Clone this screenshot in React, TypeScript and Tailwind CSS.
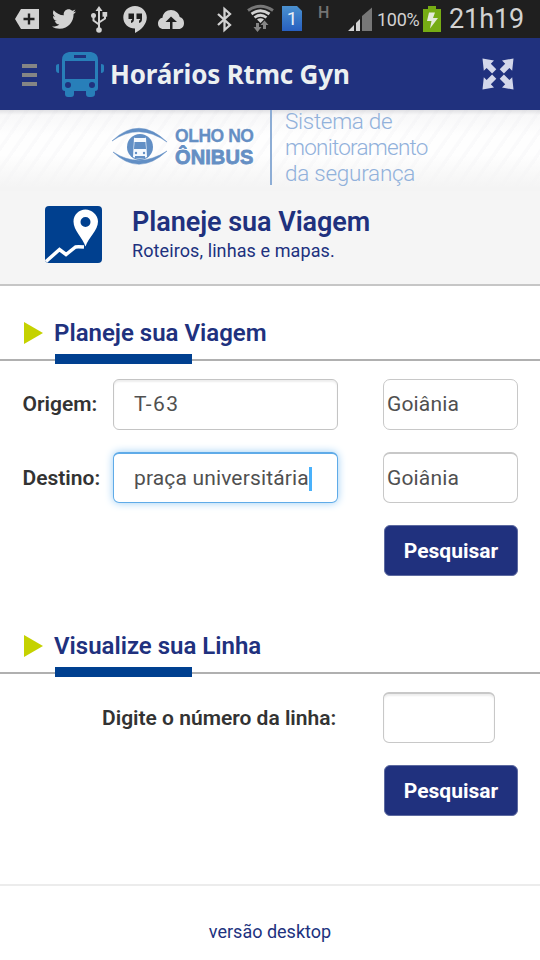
import type { ReactNode } from "react";
import { FaTwitter } from "react-icons/fa";

type IconProps = { x: number; y: number; w: number; h: number; className: string; children: ReactNode };

// Icon whose viewBox uses the coordinates of the screen it is drawn on.
function Icon({ x, y, w, h, className, children }: IconProps) {
  return (
    <svg viewBox={`${x} ${y} ${w} ${h}`} width={w} height={h} fill="currentColor" className={`shrink-0 overflow-visible ${className}`}>
      {children}
    </svg>
  );
}

function StatusBar() {
  return (
    <div className="flex h-[38px] items-start bg-[#1f1f1f] text-[#d2d2d2]">
      <Icon x={15} y={9} w={24} h={20} className="mt-[9px] ml-[15px]">
        <path d="M21 9H39V29H21L15 19Z" />
        <path d="M29 13.500v11M23.500 19h11" stroke="#1f1f1f" strokeWidth="2.400" />
      </Icon>
      <FaTwitter size={24} className="mt-[7px] ml-[13px] shrink-0" />
      <Icon x={91} y={6} w={16} h={27} className="mt-[6px] ml-[15px]">
        <path d="M99 9V30M93.500 17V20.500L99 24.500M105 15V18.500L99 22.500" fill="none" stroke="currentColor" strokeWidth="2" />
        <path d="M99 6l3.500 5h-7Z" />
        <circle cx="99" cy="30" r="2.800" />
        <circle cx="93.500" cy="15.500" r="2.500" />
        <rect x="102.500" y="12" width="4.700" height="4.700" />
      </Icon>
      <Icon x={123} y={6} w={24} h={27} className="mt-[6px] ml-[16px]">
        <path d="M135 6C128.200 6 123.300 11 123.300 17.500S128.500 28.500 135 28.500V33C142 29.500 146.800 23.500 146.800 17.500S141.800 6 135 6Z" />
        <path d="M128.500 13.500H134V19C134 21.200 133 22.500 131 23V20.500C132 20.200 132.200 19.800 132.200 19H128.500ZM136.500 13.500H142V19C142 21.200 141 22.500 139 23V20.500C140 20.200 140.200 19.800 140.200 19H136.500Z" fill="#1f1f1f" />
      </Icon>
      <Icon x={158} y={9} w={26} h={20} className="mt-[9px] ml-[11px]">
        <path d="M163.500 29C160 29 158 26.500 158 23.500C158 20.500 160 18 162.500 17.700C163 13 166.500 10 171 10C175.500 10 179 13 179.700 17C182.300 17.500 184 20 184 23C184 26.500 182 29 178.500 29H172.500V22H177L171 16.500L165.500 22H170V29Z" />
      </Icon>
      <Icon x={217} y={8} w={15} h={23} className="mt-[8px] ml-[33px]">
        <path d="M218 14L230 25L224.500 30V9L230 14L218 25" fill="none" stroke="currentColor" strokeWidth="2.300" />
      </Icon>
      <Icon x={247} y={5} w={27} h={27} className="mt-[5px] ml-[15px]">
        <path d="M248 10.500Q260.500 2 273 10.500" fill="none" stroke="#777" strokeWidth="3" />
        <path d="M251.500 14Q260.500 7.500 269.500 14M254.500 17.500Q260.500 13 266.500 17.500" fill="none" stroke="currentColor" strokeWidth="2.800" />
        <path d="M257 19.500Q260.500 17 264 19.500L260.500 23Z" />
        <path d="M256 23H259V27H261.500L257.500 32L253.500 27H256ZM263 29H266V25H268.500L264.500 20.500L260.500 25H263Z" fill="#858585" />
      </Icon>
      <div className="mt-[6px] ml-[8px] flex h-[25px] w-5 shrink-0 items-center justify-center bg-linear-to-b from-[#4b91cf] to-[#285fc0] font-[Roboto] text-[19px] leading-none text-[#e8eef6] [clip-path:polygon(0_0,75%_0,100%_20%,100%_100%,0_100%)]">1</div>
      <div className="mt-[4px] ml-[16px] w-[13px] shrink-0 font-[Roboto] text-[16px] leading-[17px] font-medium text-[#747474]">H</div>
      <Icon x={348} y={8} w={24} h={23} className="mt-[8px] ml-[17px]">
        <path d="M348 31L354 25V31ZM356 23L360 19V31H356Z" />
        <path d="M362 16L372 7.500V31H362Z" fill="#777" />
      </Icon>
      <div className="mt-[8px] ml-[5px] w-[46px] shrink-0 font-[Roboto] text-[18px] leading-[24px] tracking-[-0.3px]">100%</div>
      <Icon x={423} y={6} w={18} h={26} className="mt-[6px]">
        <path d="M428 6h8v3h5v23h-18V9h5Z" fill="#76ac14" />
        <path d="M429 12.500H435L433 18H438L430 28.500L431.500 21H427Z" fill="#e5eadb" />
      </Icon>
      <div className="mt-[2px] ml-[8px] shrink-0 font-[Roboto] text-[27px] leading-[34px] tracking-[-0.1px]">21h19</div>
    </div>
  );
}

function AppHeader() {
  return (
    <header className="flex h-[72px] items-start bg-[#20317e]">
      <div className="mt-[26px] ml-[22px] flex w-[15px] shrink-0 flex-col gap-[5px]">
        <i className="h-1 bg-[#858585]" />
        <i className="h-1 bg-[#858585]" />
        <i className="h-1 bg-[#858585]" />
      </div>
      <Icon x={56} y={52} w={48} h={45} className="mt-[14px] ml-[19px] text-[#287fb9]">
        <path fillRule="evenodd" d="M69 52H91Q98 53 98 60V88Q98 91 95 91V94Q95 97 91 97H89Q86 97 86 94V91H74V94Q74 97 71 97H68Q65 97 65 94V91Q62 91 62 88V60Q62 53 69 52ZM74 55V58H86V55ZM65 61V79H95V61ZM65 85a3 3 0 1 0 6 0a3 3 0 1 0-6 0ZM89 85a3 3 0 1 0 6 0a3 3 0 1 0-6 0Z" />
        <path d="M59 64V73Q56 73 56 70V66Q56 64 59 64ZM101 64V73Q104 73 104 70V66Q104 64 101 64Z" />
      </Icon>
      <h1 className="mt-[18px] ml-[6px] w-[260px] shrink-0 font-['Noto_Sans'] text-[26px] leading-9 font-bold tracking-[-0.18px] whitespace-nowrap text-[#ecf0f1]">Horários Rtmc Gyn</h1>
      <Icon x={482} y={58} w={32} h={32} className="mt-[20px] ml-[112px] text-[#d3d7ea]">
        <path d="M482.500 58.500l11.500 2-3.200 3.200 5.500 5.500-4.200 4.200-5.500-5.500-2.800 2.800ZM513.500 58.500l-11.500 2 3.200 3.200-5.500 5.500 4.200 4.200 5.500-5.500 2.800 2.800ZM482.500 89.500l11.500-2-3.200-3.200 5.500-5.500-4.200-4.200-5.500 5.500-2.800-2.800ZM513.500 89.500l-11.500-2 3.200-3.200-5.500-5.500 4.200-4.200 5.500 5.500 2.800-2.800Z" />
      </Icon>
    </header>
  );
}

function Banner() {
  return (
    <section className="flex h-[81px] items-start bg-[linear-gradient(to_bottom,rgba(170,170,180,0.35)_0,rgba(225,225,230,0.22)_5px,transparent_25px,transparent_45px,#f4f4f4_78px),repeating-linear-gradient(125deg,#fefefe_0,#fefefe_8px,#fafafb_9px,#fafafb_12px)]">
      <Icon x={112} y={127} w={55} h={38} className="mt-[17px] ml-[112px] text-[#628fc5]">
        <path d="M112 141Q139 115 167 142Q139 122 112 141ZM113 152Q139 177 167 151Q139 169 113 152Z" stroke="currentColor" strokeWidth="0.500" />
        <circle cx="140" cy="147" r="13" />
        <path d="M134 138Q140 134 146 138L147 157Q140 160 133 157Z" fill="#f5f9fe" />
        <path d="M134.500 142H145.500L146 149H134Z" />
        <circle cx="136" cy="153" r="1.200" /><circle cx="144" cy="153" r="1.200" />
        <path d="M135 137H145M135 157H145" stroke="currentColor" strokeWidth="2" />
      </Icon>
      <div className="mt-[16px] ml-[8px] w-[82px] shrink-0 font-['Liberation_Sans'] font-bold whitespace-nowrap text-[#658fc4]">
        <div className="text-[17.5px] leading-[21px] tracking-[-0.45px] [-webkit-text-stroke:0.3px_#658fc4]">OLHO NO</div>
        <div className="text-[20px] leading-[21px] tracking-[0.1px] [-webkit-text-stroke:0.8px_#658fc4]">ÔNIBUS</div>
      </div>
      <div className="ml-[13px] h-[75px] w-[2px] shrink-0 bg-[#8dadd5]" />
      <div className="-mt-[2px] ml-[13px] shrink-0 font-[Roboto] text-[22.500px] leading-[26px] font-light whitespace-nowrap text-[#91b1db]">
        <div className="tracking-[-0.3px]">Sistema de</div>
        <div className="tracking-[-0.75px]">monitoramento</div>
        <div className="tracking-[-0.25px]">da segurança</div>
      </div>
    </section>
  );
}

function Feature() {
  return (
    <section className="flex h-[95px] items-start border-b-2 border-[#c6c6c6] bg-[#f5f5f5]">
      <Icon x={45} y={206} w={57} h={57} className="mt-[15px] ml-[45px]">
        <rect x="45" y="206" width="57" height="57" rx="4" fill="#00408f" />
        <path fillRule="evenodd" fill="#fff" d="M85.500 209C91.500 209 98 214 98 221C98 230 88.500 237 85.500 246C82.500 237 73.500 230 73.500 221C73.500 214 79 209 85.500 209ZM80.500 221.500a5 5 0 1 0 10 0a5 5 0 1 0-10 0Z" transform="translate(0 .5)" />
        <path d="M46 261.500L59.500 249.500L66 254.500L75.500 247Q77 246.500 84 247" fill="none" stroke="#fff" strokeWidth="3.500" />
      </Icon>
      <div className="mt-[13px] ml-[30px] font-[Roboto] whitespace-nowrap text-[#20317e]">
        <h2 className="text-[27px] leading-9 font-semibold tracking-[-0.05px]">Planeje sua Viagem</h2>
        <p className="-mt-px text-[18px] leading-6 tracking-[0.1px]">Roteiros, linhas e mapas.</p>
      </div>
    </section>
  );
}

function SectionTitle({ children }: { children: string }) {
  return (
    <div className="h-[78px]">
      <div className="flex h-[68px] items-start pt-[29px]">
        <svg width="19" height="22" viewBox="0 0 19 22" className="mt-[7px] ml-6 shrink-0"><path d="M0 0L19 11L0 22Z" fill="#c5d200" /></svg>
        <h2 className="ml-[11px] text-[24px] leading-9 font-semibold whitespace-nowrap text-[#20317e]">{children}</h2>
      </div>
      <div className="flex h-[10px] items-center">
        <i className="mt-[2px] h-[2px] w-[55px] bg-[#b0b0b0]" />
        <i className="h-[10px] w-[137px] bg-[#004090]" />
        <i className="mt-[2px] h-[2px] flex-1 bg-[#b0b0b0]" />
      </div>
    </div>
  );
}

function PesquisarButton() {
  return <button className="ml-[384px] block h-[51px] w-[134px] rounded-[6px] border border-[#5d6aa0] bg-[#20317e] pt-[2px] text-[21px] font-bold text-white">Pesquisar</button>;
}

export default function App() {
  return (
    <main className="h-[960px] w-[540px] overflow-hidden bg-white font-[Roboto]">
      <StatusBar />
      <AppHeader />
      <Banner />
      <Feature />
      <SectionTitle>Planeje sua Viagem</SectionTitle>
      <form className="text-[21px] text-[#505050]">
        <div className="mt-[15px] flex h-[51px] items-center">
          <label className="ml-[22.5px] w-[90.5px] shrink-0 pb-[2px] text-[21px] leading-6 font-semibold text-[#333]">Origem:</label>
          <div className="flex h-[51px] w-[225px] items-center rounded-[6px] border border-[#c4c4c4] pl-5 tracking-[1.5px] shadow-[inset_0_2px_2px_#eee]">T-63</div>
          <div className="ml-[45px] flex h-[51px] w-[135px] items-center rounded-[7px] border border-[#c8c8c8] pl-[3px] tracking-[0.15px]">Goiânia</div>
        </div>
        <div className="mt-[22px] flex h-[51px] items-center">
          <label className="ml-[22.5px] w-[90.5px] shrink-0 text-[21px] leading-6 font-semibold whitespace-nowrap text-[#333]">Destino:</label>
          <div className="flex h-[51px] w-[225px] items-center rounded-[6px] border border-t-2 border-[#5fabe8] pt-px pl-5 tracking-[0.15px] whitespace-nowrap shadow-[0_0_8px_#9bcdf5]">praça universitária<i className="h-6 w-[3px] bg-[#49b1fb]" /></div>
          <div className="ml-[45px] flex h-[51px] w-[135px] items-center rounded-[7px] border border-t-2 border-[#c8c8c8] pt-px pl-[3px] tracking-[0.15px]">Goiânia</div>
        </div>
      </form>
      <div className="mt-[22px]"><PesquisarButton /></div>
      <div className="mt-[23px]"><SectionTitle>Visualize sua Linha</SectionTitle></div>
      <div className="mt-[15px] flex h-[51px] items-center">
        <label className="ml-[102px] w-[281px] shrink-0 text-[21px] leading-6 font-semibold whitespace-nowrap text-[#333]">Digite o número da linha:</label>
        <div className="h-[51px] w-[112px] rounded-[6px] border border-t-2 border-[#c8c8c8] shadow-[inset_0_2px_2px_#eee]" />
      </div>
      <div className="mt-[22px]"><PesquisarButton /></div>
      <footer className="mt-[68px] border-t-2 border-[#ececec] pt-[34px] text-center text-[18px] leading-6 text-[#20317e]">versão desktop</footer>
    </main>
  );
}
